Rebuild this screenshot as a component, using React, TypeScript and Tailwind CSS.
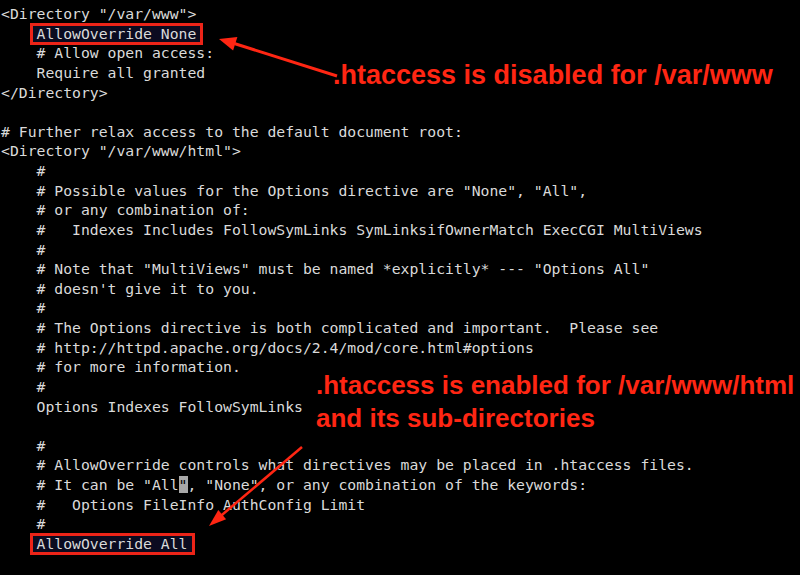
import type { ReactNode } from 'react';

const Boxed = ({ children }: { children: ReactNode }) => (
  <span className="relative">
    <span className="absolute -left-[7px] -right-[7px] -top-[2px] -bottom-[3px] border-[3px] border-[#ec2418] bg-[#0b0b20]" />
    <span className="relative">{children}</span>
  </span>
);

const lines: ReactNode[] = [
  '<Directory "/var/www">',
  <>{'    '}<Boxed>AllowOverride None</Boxed></>,
  '    # Allow open access:',
  '    Require all granted',
  '</Directory>',
  '',
  '# Further relax access to the default document root:',
  '<Directory "/var/www/html">',
  '    #',
  '    # Possible values for the Options directive are "None", "All",',
  '    # or any combination of:',
  '    #   Indexes Includes FollowSymLinks SymLinksifOwnerMatch ExecCGI MultiViews',
  '    #',
  '    # Note that "MultiViews" must be named *explicitly* --- "Options All"',
  "    # doesn't give it to you.",
  '    #',
  '    # The Options directive is both complicated and important.  Please see',
  '    # http://httpd.apache.org/docs/2.4/mod/core.html#options',
  '    # for more information.',
  '    #',
  '    Options Indexes FollowSymLinks',
  '',
  '    #',
  '    # AllowOverride controls what directives may be placed in .htaccess files.',
  <>{'    # It can be "All'}<span className="bg-[#a8a8a8] text-black">"</span>{', "None", or any combination of the keywords:'}</>,
  '    #   Options FileInfo AuthConfig Limit',
  '    #',
  <>{'    '}<Boxed>AllowOverride All</Boxed></>,
];

export default function App() {
  return (
    <div className="relative w-[800px] h-[575px] overflow-hidden bg-black">
      <pre className="pt-[4px] pl-[1px] font-['DejaVu_Sans_Mono',monospace] text-[14.75px] leading-[19.63px] text-[#dadada]">
        {lines.map((l, i) => (
          <div key={i} className="h-[19.63px] whitespace-pre">{l}</div>
        ))}
      </pre>

      {/* annotations */}
      <div className="absolute left-[333px] top-[60px] font-['Liberation_Sans',Arial,sans-serif] font-bold text-[27px] leading-[30px] text-[#ff2613] whitespace-nowrap">
        .htaccess is disabled for /var/www
      </div>
      <div className="absolute left-[316px] top-[369px] flex flex-col font-['Liberation_Sans',Arial,sans-serif] font-bold text-[26px] leading-[33px] text-[#ff2613] whitespace-nowrap">
        <span>.htaccess is enabled for /var/www/html</span>
        <span>and its sub-directories</span>
      </div>

      <svg className="absolute inset-0 pointer-events-none" width="800" height="575">
        <line x1="337" y1="76" x2="228" y2="41.5" stroke="#ff2613" strokeWidth="3" />
        <polygon points="219,39 237.4,37.1 233.1,50.5" fill="#ff2613" />
        <line x1="302" y1="447" x2="216" y2="520" stroke="#ff2613" strokeWidth="2.5" />
        <polygon points="209,526 226.1,519.2 218.3,510" fill="#ff2613" />
      </svg>
    </div>
  );
}
